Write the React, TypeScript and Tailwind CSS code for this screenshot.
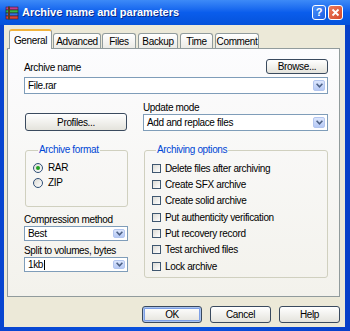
import React from 'react';

// WinRAR "Archive name and parameters" dialog, XP Luna look

function ComboArrow() {
  return (
    <div className="ml-auto mr-[2px] flex h-[calc(100%-4px)] w-[12px] items-center justify-center rounded-[2px] border border-[#B3C6EF] bg-gradient-to-b from-[#DCE6FD] to-[#B6C9F5]">
      <svg width="7" height="5" viewBox="0 0 7 5">
        <path d="M0.6 0.8 L3.5 3.8 L6.4 0.8" stroke="#4D6185" strokeWidth="1.6" fill="none" />
      </svg>
    </div>
  );
}

function Combo({ text, h, caret }: { text: string; h: string; caret?: boolean }) {
  return (
    <div className={`flex items-center border border-[#7F9DB9] bg-white pl-[3px] ${h}`}>
      <span>{text}</span>
      {caret && <span className="ml-[1px] h-[10px] w-[1px] bg-black" />}
      <ComboArrow />
    </div>
  );
}

function Btn({ label, w, def }: { label: string; w: string; def?: boolean }) {
  return (
    <button
      className={`flex items-center justify-center rounded-[3px] border border-[#3A4A5E] bg-gradient-to-b from-white to-[#E4E3DC] ${w} ${
        def ? 'shadow-[inset_0_0_0_1px_#A9C3F0,inset_0_0_0_2px_#7EA0E6]' : ''
      }`}
    >
      {label}
    </button>
  );
}

function Checkbox({ label }: { label: string }) {
  return (
    <div className="flex h-[16.33px] items-center gap-[4px]">
      <span className="h-[9px] w-[9px] border border-[#3F5770] bg-gradient-to-br from-[#DCDBD5] to-white" />
      <span>{label}</span>
    </div>
  );
}

function Radio({ label, checked }: { label: string; checked?: boolean }) {
  return (
    <div className="flex h-[15px] items-center gap-[5px]">
      <span className="flex h-[10px] w-[10px] items-center justify-center rounded-full border border-[#2F4F77] bg-gradient-to-br from-[#DCDBD5] to-white">
        {checked && <span className="h-[4px] w-[4px] rounded-full bg-[#21A121]" />}
      </span>
      <span>{label}</span>
    </div>
  );
}

function RarIcon() {
  return (
    <svg width="14" height="14" viewBox="0 0 14 14">
      <rect x="1" y="1" width="12" height="3" fill="#C23C8E" stroke="#3A1A3A" strokeWidth="0.6" />
      <rect x="1" y="4" width="12" height="3" fill="#3BB54A" stroke="#1A3A1A" strokeWidth="0.6" />
      <rect x="1" y="7" width="12" height="3" fill="#3672DC" stroke="#1A1A4A" strokeWidth="0.6" />
      <rect x="1" y="10" width="12" height="3" fill="#D8433A" stroke="#4A1A1A" strokeWidth="0.6" />
      <rect x="3" y="0.5" width="2" height="13" fill="#5A3A1E" />
    </svg>
  );
}

export default function App() {
  const tabs = [
    { name: 'Advanced', w: 'w-[48px]', ml: 'ml-[1px]' },
    { name: 'Files', w: 'w-[34px]', ml: 'ml-[1px]' },
    { name: 'Backup', w: 'w-[40px]', ml: 'ml-[2px]' },
    { name: 'Time', w: 'w-[33px]', ml: 'ml-[2px]' },
    { name: 'Comment', w: 'w-[44px]', ml: 'ml-[2px]' },
  ];

  return (
    <div className="flex h-[331px] w-[350px] flex-col bg-gradient-to-r from-[#0845D0] via-[#0A54E0] to-[#0840C8] font-['Liberation_Sans',Arial,sans-serif] text-[10px] tracking-[-0.35px] text-black">
      {/* Title bar */}
      <div className="flex h-[25px] items-center bg-gradient-to-b from-[#3D8AF7] via-[#0A5DEC] to-[#0552DA] pl-[5px] pr-[7px]">
        <RarIcon />
        <span className="ml-[3px] text-[11px] font-bold tracking-normal text-white [text-shadow:1px_1px_0_#0A2A8A]">
          Archive name and parameters
        </span>
        <div className="ml-auto flex gap-[2px]">
          <div className="flex h-[15px] w-[14px] items-center justify-center rounded-[3px] border border-white bg-gradient-to-br from-[#4B90F8] to-[#1B5CE4] text-[11px] font-bold tracking-normal text-white">
            ?
          </div>
          <div className="flex h-[15px] w-[15px] items-center justify-center rounded-[3px] border border-white bg-gradient-to-br from-[#EC7A5A] to-[#D4472A]">
            <svg width="9" height="9" viewBox="0 0 9 9">
              <path d="M1.5 1.5 L7.5 7.5 M7.5 1.5 L1.5 7.5" stroke="white" strokeWidth="1.8" />
            </svg>
          </div>
        </div>
      </div>

      {/* Dialog body */}
      <div className="mb-[4px] ml-[4px] mr-[5px] flex flex-1 flex-col bg-[#ECE9D8] pt-[4px]">
        {/* Tabs */}
        <div className="ml-[5px] flex h-[19px] items-end">
          <div className="relative z-10 -mb-[1px] flex h-[20px] w-[43px] items-center justify-center rounded-t-[3px] border-x border-t-2 border-x-[#919B9C] border-t-[#F2B33C] bg-[#FCFCFE]">
            General
          </div>
          {tabs.map((t) => (
            <div
              key={t.name}
              className={`flex h-[15px] items-center justify-center rounded-t-[3px] border-x border-t border-[#919B9C] bg-gradient-to-b from-white to-[#ECEBE6] ${t.w} ${t.ml}`}
            >
              {t.name}
            </div>
          ))}
        </div>

        {/* Tab page */}
        <div className="ml-[3px] mr-[5px] flex h-[249px] flex-col border border-[#919B9C] bg-gradient-to-b from-[#FCFCFE] to-[#F3F2EC] pl-[16px] pr-[11px]">
          <div className="mt-[10px] flex items-end justify-between">
            <span className="leading-[12px]">Archive name</span>
            <Btn label="Browse..." w="w-[62px] h-[15px]" />
          </div>
          <div className="mt-[3px]">
            <Combo text="File.rar" h="h-[17px]" />
          </div>

          <div className="mt-[8px] grid grid-cols-[104px_1fr] items-end gap-x-[15px]">
            <Btn label="Profiles..." w="ml-[1px] w-[102px] h-[18px]" />
            <div className="flex flex-col">
              <span className="h-[12px] leading-[12px]">Update mode</span>
              <Combo text="Add and replace files" h="h-[17px]" />
            </div>
          </div>

          <div className="mt-[13px] grid grid-cols-[104px_1fr] items-start gap-x-[16px]">
            <div className="flex flex-col">
              <fieldset className="ml-[1px] h-[63px] rounded-[3px] border border-[#D0D0BF] pl-[7px]">
                <legend className="ml-[5px] px-[1px] leading-[12px] text-[#0046D5]">Archive format</legend>
                <div className="mt-[4px]">
                  <Radio label="RAR" checked />
                  <Radio label="ZIP" />
                </div>
              </fieldset>
              <span className="mt-[7px] h-[12px] leading-[12px]">Compression method</span>
              <Combo text="Best" h="h-[15px]" />
              <span className="mt-[4px] h-[12px] leading-[12px]">Split to volumes, bytes</span>
              <Combo text="1kb" h="h-[15px]" caret />
            </div>

            <fieldset className="h-[134px] rounded-[3px] border border-[#D0D0BF] pl-[7px]">
              <legend className="ml-[4px] px-[1px] leading-[12px] text-[#0046D5]">Archiving options</legend>
              <div className="mt-[4px]">
                <Checkbox label="Delete files after archiving" />
                <Checkbox label="Create SFX archive" />
                <Checkbox label="Create solid archive" />
                <Checkbox label="Put authenticity verification" />
                <Checkbox label="Put recovery record" />
                <Checkbox label="Test archived files" />
                <Checkbox label="Lock archive" />
              </div>
            </fieldset>
          </div>
        </div>

        {/* Bottom buttons */}
        <div className="mr-[5px] mt-[9px] flex justify-end gap-[8px]">
          <Btn label="OK" w="w-[60px] h-[17px]" def />
          <Btn label="Cancel" w="w-[61px] h-[17px]" />
          <Btn label="Help" w="w-[61px] h-[17px]" />
        </div>
      </div>
    </div>
  );
}
